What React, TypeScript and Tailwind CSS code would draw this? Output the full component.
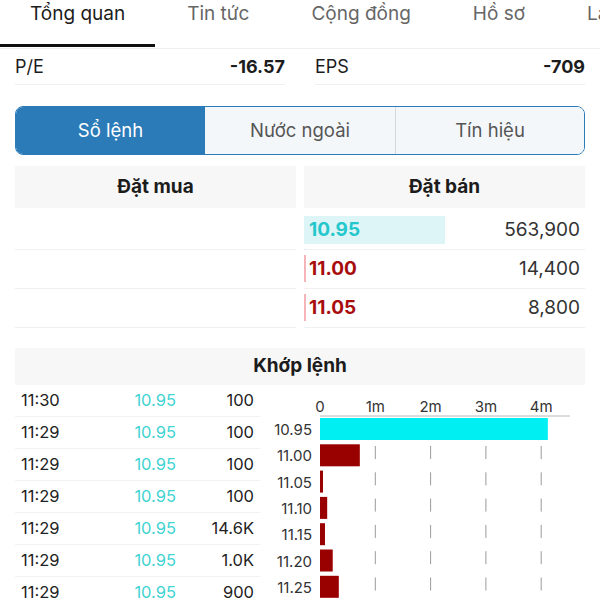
import { useMemo } from "react";

const tabs = ["Tổng quan", "Tin tức", "Cộng đồng", "Hồ sơ", "Lãnh đạo"];

const asks = [
  { price: "10.95", vol: "563,900", kind: "ref" },
  { price: "11.00", vol: "14,400", kind: "up" },
  { price: "11.05", vol: "8,800", kind: "up" },
];

const trades = [
  { time: "11:30", price: "10.95", vol: "100" },
  { time: "11:29", price: "10.95", vol: "100" },
  { time: "11:29", price: "10.95", vol: "100" },
  { time: "11:29", price: "10.95", vol: "100" },
  { time: "11:29", price: "10.95", vol: "14.6K" },
  { time: "11:29", price: "10.95", vol: "1.0K" },
  { time: "11:29", price: "10.95", vol: "900" },
];

const levels = [
  { price: "10.95", value: 4.12, ref: true },
  { price: "11.00", value: 0.72 },
  { price: "11.05", value: 0.05 },
  { price: "11.10", value: 0.13 },
  { price: "11.15", value: 0.09 },
  { price: "11.20", value: 0.23 },
  { price: "11.25", value: 0.34 },
];

function VolumeChart() {
  const unit = 55.3;
  const ticks = ["0", "1m", "2m", "3m", "4m"];
  const rows = useMemo(() => levels.map((l, i) => ({ ...l, y: 33 + i * 26.3 })), []);

  return (
    <svg width="315" height="214" className="block">
      {ticks.map((t, i) => (
        <text key={t} x={50 + i * unit} y={27} fontSize="15" fill="#333" textAnchor="middle">
          {t}
        </text>
      ))}
      {ticks.slice(1).map((t, i) => (
        <line
          key={t}
          x1={50 + (i + 1) * unit}
          x2={50 + (i + 1) * unit}
          y1={61}
          y2={214}
          stroke="#9a9a9a"
          strokeWidth="1"
          strokeDasharray="13 13.3"
        />
      ))}
      <line x1="50" x2="300" y1="31" y2="31" stroke="#b8b8b8" strokeWidth="1" />
      {rows.map((r) => (
        <g key={r.price}>
          <rect x={50} y={r.y} width={Math.max(r.value * unit, 3)} height={22} fill={r.ref ? "#00eff2" : "#990000"} />
          <text x={42} y={r.y + 17} fontSize="15" fill="#333" textAnchor="end">
            {r.price}
          </text>
        </g>
      ))}
    </svg>
  );
}

export default function App() {
  return (
    <div className="h-[600px] w-[600px] overflow-hidden bg-white font-['Inter',sans-serif] text-[#1c1c1c]">
      {/* Tabs */}
      <div className="flex h-[49px] gap-[2px] overflow-hidden whitespace-nowrap border-b border-[#eeeeee]">
        {tabs.map((t, i) => (
          <div
            key={t}
            className={`shrink-0 px-[30px] text-[19px] leading-[28px] ${
              i === 0 ? "h-[47px] border-b-[3px] border-[#111] text-[#1c1c1c]" : "text-[#666]"
            }`}
          >
            {t}
          </div>
        ))}
      </div>

      {/* P/E - EPS */}
      <div className="flex gap-[30px] px-[15px]">
        <div className="flex h-[36px] flex-1 items-center justify-between border-b border-[#f0f0f0] text-[18px]">
          <span>P/E</span>
          <span className="font-bold">-16.57</span>
        </div>
        <div className="flex h-[36px] flex-1 items-center justify-between border-b border-[#f0f0f0] text-[18px]">
          <span>EPS</span>
          <span className="font-bold">-709</span>
        </div>
      </div>

      {/* Segmented control */}
      <div className="mx-[15px] mt-[21px] flex h-[49px] overflow-hidden rounded-[8px] border-[1.5px] border-[#2b7bb9] text-[18.5px]">
        <div className="flex w-[189px] items-center justify-center bg-[#2b7bb9] text-white">Sổ lệnh</div>
        <div className="flex w-[191px] items-center justify-center border-r border-[#d4d9de] bg-[#f4f7fa] text-[#555]">
          Nước ngoài
        </div>
        <div className="flex flex-1 items-center justify-center bg-[#f4f7fa] text-[#555]">Tín hiệu</div>
      </div>

      {/* Order book */}
      <div className="mt-[11px] flex gap-[8px] px-[15px]">
        <div className="flex-1">
          <div className="flex h-[42px] items-center justify-center bg-[#f7f7f7] text-[19px] font-bold">Đặt mua</div>
          <div className="mt-[3px]">
            {asks.map((a, i) => (
              <div key={i} className="h-[39px] border-b border-[#f0f0f0]" />
            ))}
          </div>
        </div>
        <div className="flex-1">
          <div className="flex h-[42px] items-center justify-center bg-[#f7f7f7] text-[19px] font-bold">Đặt bán</div>
          <div className="mt-[3px]">
            {asks.map((a) => (
              <div key={a.price} className="relative flex h-[39px] items-center justify-between border-b border-[#f0f0f0] pr-[5px] text-[19px]">
                {a.kind === "ref" ? (
                  <div className="absolute left-0 top-[5px] h-[28px] w-[141px] bg-[#ddf5f7]" />
                ) : (
                  <div className="absolute left-0 top-[5px] h-[27px] w-[2px] bg-[#f5b5b8]" />
                )}
                <span className={`relative pl-[5px] font-bold ${a.kind === "ref" ? "text-[#24c7cc]" : "text-[#a80d0d]"}`}>
                  {a.price}
                </span>
                <span className="text-[#333]">{a.vol}</span>
              </div>
            ))}
          </div>
        </div>
      </div>

      {/* Khớp lệnh */}
      <div className="mx-[15px] mt-[20px] flex h-[37px] items-center justify-center bg-[#f7f7f7] text-[19px] font-bold">
        Khớp lệnh
      </div>
      <div className="flex">
        <div className="ml-[15px] w-[245px]">
          {trades.map((t, i) => (
            <div key={i} className="flex h-[32px] items-center border-b border-[#f2f2f2] pl-[6px] text-[16.5px]">
              <span className="w-[79px] text-[#222]">{t.time}</span>
              <span className="w-[76px] text-right text-[#3fd3d3]">{t.price}</span>
              <span className="w-[78px] text-right text-[#222]">{t.vol}</span>
            </div>
          ))}
        </div>
        <div className="ml-[10px]">
          <VolumeChart />
        </div>
      </div>
    </div>
  );
}
